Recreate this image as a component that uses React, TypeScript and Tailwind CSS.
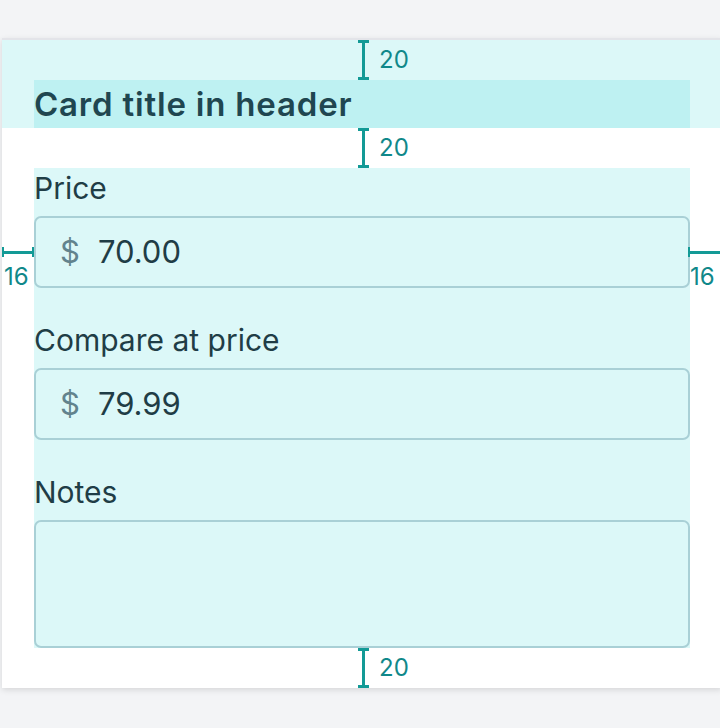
import React from "react";

const font = { fontFamily: "Inter, 'Noto Sans', sans-serif" };

function VMark({ label }: { label: string }) {
    return (
        <div className="absolute left-[356px] top-0 flex h-[40px] items-center">
            <div className="flex h-full w-[11px] flex-col items-center">
                <div className="h-[3px] w-[11px] bg-[#139a96]" />
                <div className="w-[3px] flex-1 bg-[#139a96]" />
                <div className="h-[3px] w-[11px] bg-[#139a96]" />
            </div>
            <span className="ml-[10px] text-[24px] leading-none text-[#10888a]">{label}</span>
        </div>
    );
}

function Field({ label, value }: { label: string; value: string }) {
    return (
        <div className="flex flex-col">
            <label className="h-[40px] text-[30px] leading-[40px] text-[#1f3d46]">{label}</label>
            <div className="mt-[8px] flex h-[72px] items-center rounded-[7px] border-2 border-[#a9d0d6] px-[24px]">
                <span className="text-[31px] text-[#62838d]">$</span>
                <span className="ml-[18px] text-[31px] text-[#1f3d46]">{value}</span>
            </div>
        </div>
    );
}

export default function App() {
    return (
        <div className="h-[728px] w-[720px] overflow-hidden bg-[#f3f4f6] pt-[38px]" style={font}>
            <div className="relative ml-[2px] w-[720px] border-t-2 border-[#e3e4e9] bg-white shadow-[0_2px_6px_rgba(0,0,0,0.12)]">
                <div className="relative bg-[#dcf8f8] px-[32px] pt-[40px]">
                    <VMark label="20" />
                    <h2 className="h-[48px] w-[656px] bg-[#bef1f2] text-[33px] font-semibold leading-[48px] tracking-[0.8px] text-[#1f4650]">
                        Card title in header
                    </h2>
                </div>
                <div className="relative h-[40px]">
                    <VMark label="20" />
                </div>
                <div className="px-[32px]">
                    <div className="flex w-[656px] flex-col gap-[32px] bg-[#dcf8f8]">
                        <Field label="Price" value="70.00" />
                        <Field label="Compare at price" value="79.99" />
                        <div className="flex flex-col">
                            <label className="h-[40px] text-[30px] leading-[40px] text-[#1f3d46]">Notes</label>
                            <div className="mt-[8px] h-[128px] rounded-[7px] border-2 border-[#a9d0d6]" />
                        </div>
                    </div>
                </div>
                <div className="relative h-[40px]">
                    <VMark label="20" />
                </div>
                <div className="absolute left-0 top-[207px] w-[32px]">
                    <div className="flex h-[10px] items-center">
                        <div className="h-[10px] w-[2px] bg-[#139a96]" />
                        <div className="h-[3px] flex-1 bg-[#139a96]" />
                        <div className="h-[10px] w-[2px] bg-[#139a96]" />
                    </div>
                    <div className="mt-[8px] pl-[2px] text-[24px] leading-none text-[#10888a]">16</div>
                </div>
                <div className="absolute right-[2px] top-[207px] w-[32px]">
                    <div className="flex h-[10px] items-center">
                        <div className="h-[10px] w-[2px] bg-[#139a96]" />
                        <div className="h-[3px] flex-1 bg-[#139a96]" />
                    </div>
                    <div className="mt-[8px] pl-[2px] text-[24px] leading-none text-[#10888a]">16</div>
                </div>
            </div>
        </div>
    );
}
